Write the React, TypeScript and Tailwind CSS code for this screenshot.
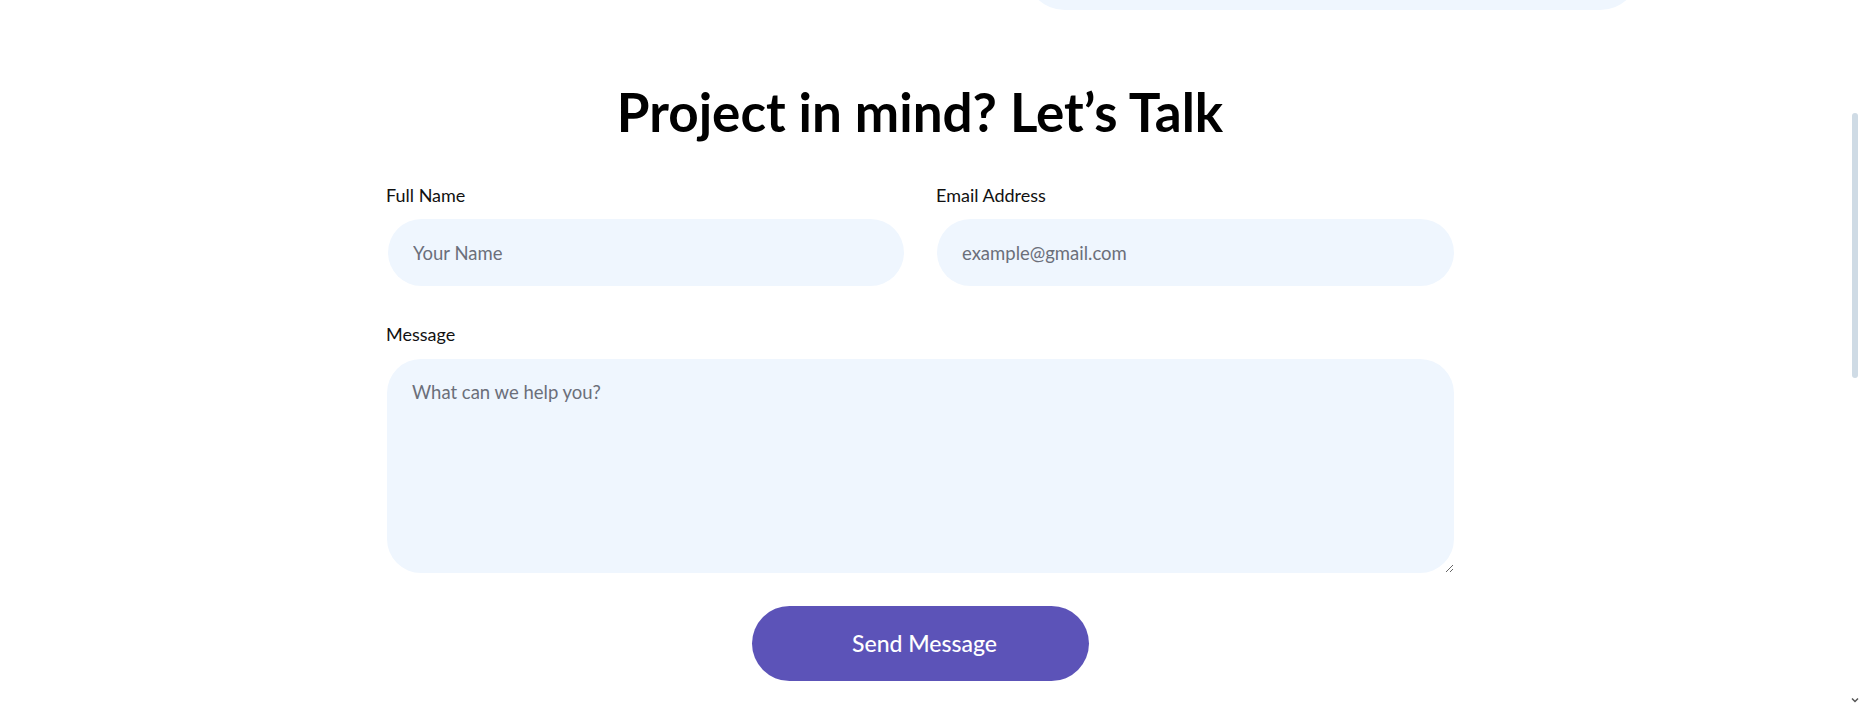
import React from "react";

export default function App() {
  const font = { fontFamily: "Lato, 'Noto Sans', sans-serif" } as React.CSSProperties;
  return (
    <div className="flex w-full h-[706px] overflow-hidden bg-white" style={font}>
      <main className="flex-1 flex flex-col pr-[7px]">
        <div className="grid grid-cols-[1025px_615px] h-[80px] -mt-[70px]">
          <div />
          <div className="bg-[#eff6fe] rounded-[40px]" />
        </div>

        <div className="w-[1068px] mx-auto flex flex-col">
          <h1 className="mt-[70px] text-center text-[53px] leading-[64px] font-bold text-black">
            Project in mind? Let’s Talk
          </h1>

          <div className="mt-[39px] grid grid-cols-2 gap-x-[32px]">
            <div className="flex flex-col">
              <label className="text-[18px] leading-[24px] text-[#111111]">Full Name</label>
              <input
                className="mt-[12px] ml-[2px] h-[67px] rounded-full bg-[#eff6fe] px-[25px] text-[18.5px] text-[#111] outline-none placeholder:text-[#6b6f7a]"
                placeholder="Your Name"
              />
            </div>
            <div className="flex flex-col">
              <label className="text-[18px] leading-[24px] text-[#111111]">Email Address</label>
              <input
                className="mt-[12px] ml-[1px] h-[67px] rounded-full bg-[#eff6fe] px-[25px] text-[18.5px] text-[#111] outline-none placeholder:text-[#6b6f7a]"
                placeholder="example@gmail.com"
              />
            </div>
          </div>

          <label className="mt-[36px] text-[18px] leading-[24px] text-[#111111]">Message</label>
          <textarea
            className="mt-[13px] ml-[1px] h-[214px] rounded-[34px] bg-[#eff6fe] px-[25px] py-[21px] text-[18.5px] leading-[24px] text-[#111] outline-none placeholder:text-[#6b6f7a]"
            placeholder="What can we help you?"
          />

          <div className="flex justify-center mt-[33px]">
            <button className="w-[337px] h-[75px] rounded-full bg-[#5c53b8] pl-[9px] text-white text-[23px] font-medium">
              Send Message
            </button>
          </div>
        </div>
      </main>

      <div className="w-[15px] flex flex-col items-center bg-white">
        <div className="mt-[113px] w-[6px] h-[265px] rounded-full bg-[#cfdbe5]" />
        <div className="mt-auto mb-[3px]">
          <svg width="8" height="6" viewBox="0 0 8 6">
            <path d="M1 1.5 L4 4.5 L7 1.5" stroke="#555" strokeWidth="1.5" fill="none" />
          </svg>
        </div>
      </div>
    </div>
  );
}
